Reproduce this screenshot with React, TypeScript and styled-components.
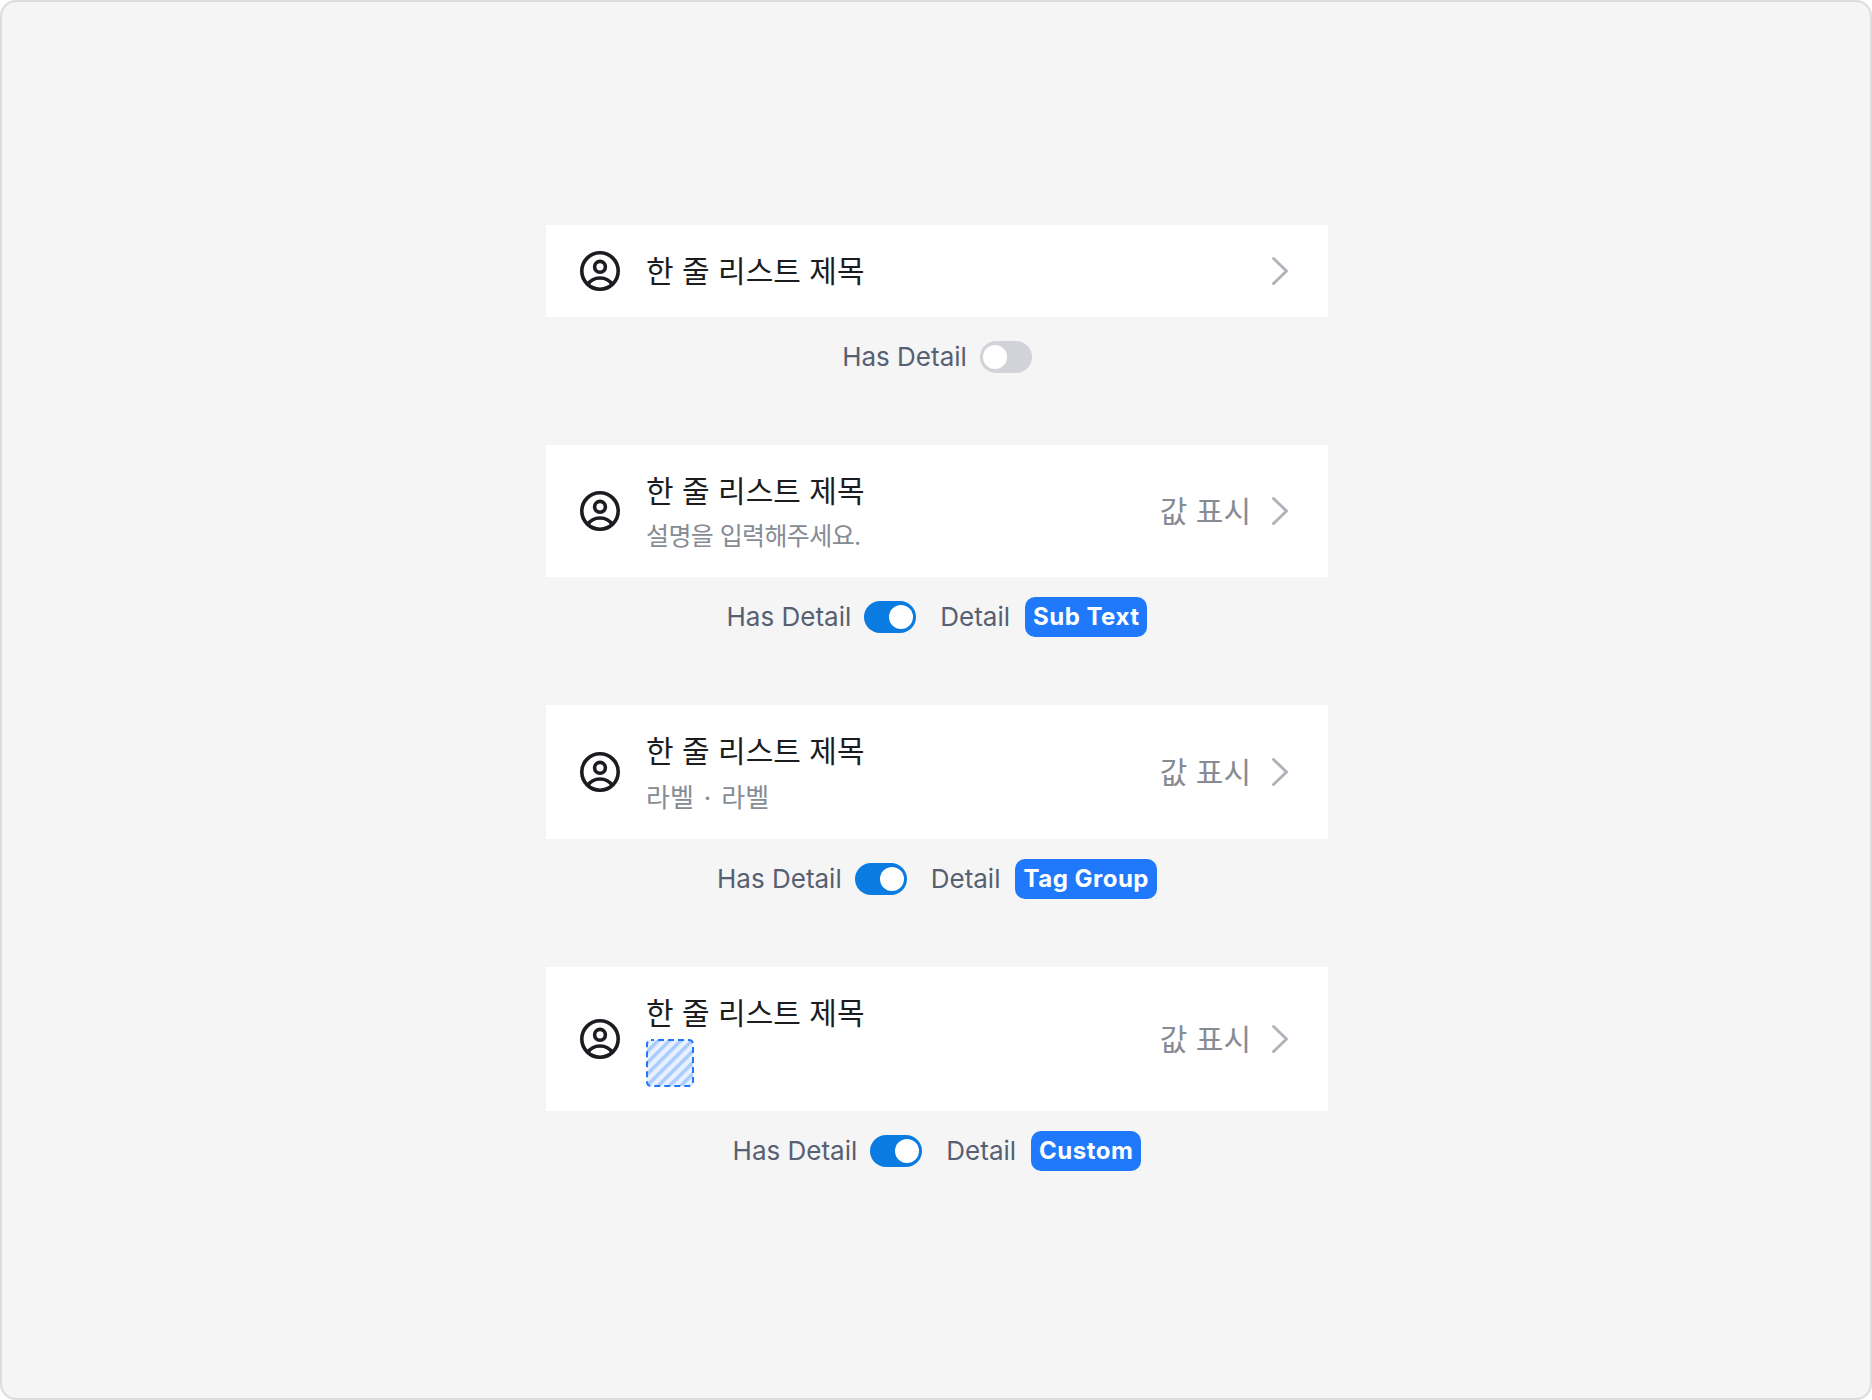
import React from 'react'
import styled, { createGlobalStyle } from 'styled-components'

const fontStack = `Inter, 'Noto Sans CJK KR', sans-serif`

const GlobalStyle = createGlobalStyle`
  html, body {
    margin: 0;
    padding: 0;
  }
  * {
    box-sizing: border-box;
  }
  body {
    font-family: ${fontStack};
    background: #fff;
  }
`

const Frame = styled.div`
  display: flex;
  flex-direction: column;
  align-items: center;
  justify-content: center;
  gap: 68px;
  width: 1872px;
  height: 1400px;
  padding-left: 2px;
  padding-bottom: 4px;
  background: #f5f5f5;
  border: 2px solid #dcdcdc;
  border-radius: 16px;
`

const Section = styled.section`
  display: flex;
  flex-direction: column;
  align-items: center;
  gap: 20px;
  width: 782px;
`

const Card = styled.div<{ $compact: boolean }>`
  display: flex;
  align-items: center;
  width: 100%;
  padding: ${p => (p.$compact ? '22px' : '24px')} 32px ${p => (p.$compact ? '22px' : '24px')} 30px;
  background: #fff;
`

const IconBox = styled.span`
  display: flex;
  flex: none;
  width: 48px;
  height: 48px;
`

const ChevronBox = styled(IconBox)`
  width: 32px;
  margin-left: 13px;
`

const Body = styled.div`
  display: flex;
  flex: 1;
  flex-direction: column;
  align-items: flex-start;
  gap: 4px;
  margin-left: 22px;
`

const Title = styled.div`
  font-size: 30px;
  line-height: 44px;
  color: #1a1c20;
`

const SubText = styled.div`
  padding-top: 2px;
  font-size: 25px;
  line-height: 34px;
  letter-spacing: -0.6px;
  color: #868b94;
`

const TagGroup = styled.div`
  display: flex;
  padding-top: 4px;
  font-size: 26px;
  line-height: 34px;
  color: #868b94;
`

const TagDot = styled.span`
  margin: 0 10px;
`

const Placeholder = styled.svg`
  display: block;
  width: 48px;
  height: 48px;
`

const Value = styled.span`
  font-size: 30px;
  line-height: 44px;
  color: #868b94;
`

const Controls = styled.div`
  display: flex;
  align-items: center;
  height: 40px;
`

const Label = styled.span`
  font-size: 26px;
  line-height: 40px;
  color: #566072;
`

const Switch = styled.span<{ $on: boolean }>`
  display: flex;
  justify-content: ${p => (p.$on ? 'flex-end' : 'flex-start')};
  align-items: center;
  width: 52px;
  height: 32px;
  margin-left: 13px;
  padding: 0 3px;
  border-radius: 16px;
  background: ${p => (p.$on ? '#0a7be0' : '#d1d3d8')};
`

const Knob = styled.span`
  width: 24px;
  height: 24px;
  border-radius: 50%;
  background: #fff;
`

const DetailLabel = styled(Label)`
  margin-left: 24px;
`

const Badge = styled.span`
  margin-left: 15px;
  padding: 0 8px;
  height: 40px;
  border-radius: 10px;
  font-size: 24px;
  font-weight: 700;
  letter-spacing: 0.5px;
  line-height: 40px;
  color: #fff;
  background: #2079fb;
`

const PersonIcon = () => (
  <svg width="48" height="48" viewBox="0 0 24 24" fill="none" stroke="#1a1c20" strokeWidth="1.8">
    <circle cx="12" cy="12" r="9.1" />
    <circle cx="12" cy="9.9" r="2.7" />
    <path d="M5.8 18.9C7.2 16.6 9.4 15.5 12 15.5S16.8 16.6 18.2 18.9" />
  </svg>
)

const ChevronIcon = () => (
  <svg width="32" height="48" viewBox="0 0 32 48" fill="none" stroke="#b0b3ba" strokeWidth="3" strokeLinecap="round" strokeLinejoin="round">
    <path d="M9.5 11.5 22.5 24 9.5 36.5" />
  </svg>
)

const HatchedSlot = () => (
  <Placeholder viewBox="0 0 48 48">
    <defs>
      <pattern id="hatch" width="8" height="8" patternUnits="userSpaceOnUse" patternTransform="rotate(45)">
        <rect width="8" height="8" fill="#e8f1ff" />
        <rect width="3.5" height="8" fill="#a9cbfd" />
      </pattern>
    </defs>
    <rect x="1" y="1" width="46" height="46" rx="4" fill="url(#hatch)" stroke="#2079fb" strokeWidth="2" strokeDasharray="6 4" strokeDashoffset="3" />
  </Placeholder>
)

interface RowProps {
  detail?: string
  value?: boolean
  children?: React.ReactNode
}

const Row: React.FC<RowProps> = ({ detail, value, children }) => (
  <Section>
    <Card $compact={!children}>
      <IconBox>
        <PersonIcon />
      </IconBox>
      <Body>
        <Title>한 줄 리스트 제목</Title>
        {children}
      </Body>
      {value && <Value>값 표시</Value>}
      <ChevronBox>
        <ChevronIcon />
      </ChevronBox>
    </Card>
    <Controls>
      <Label>Has Detail</Label>
      <Switch $on={!!detail}>
        <Knob />
      </Switch>
      {detail && (
        <>
          <DetailLabel>Detail</DetailLabel>
          <Badge>{detail}</Badge>
        </>
      )}
    </Controls>
  </Section>
)

export default function App() {
  return (
    <>
      <GlobalStyle />
      <Frame>
        <Row />
        <Row detail="Sub Text" value>
          <SubText>설명을 입력해주세요.</SubText>
        </Row>
        <Row detail="Tag Group" value>
          <TagGroup>
            <span>라벨</span>
            <TagDot>·</TagDot>
            <span>라벨</span>
          </TagGroup>
        </Row>
        <Row detail="Custom" value>
          <HatchedSlot />
        </Row>
      </Frame>
    </>
  )
}
